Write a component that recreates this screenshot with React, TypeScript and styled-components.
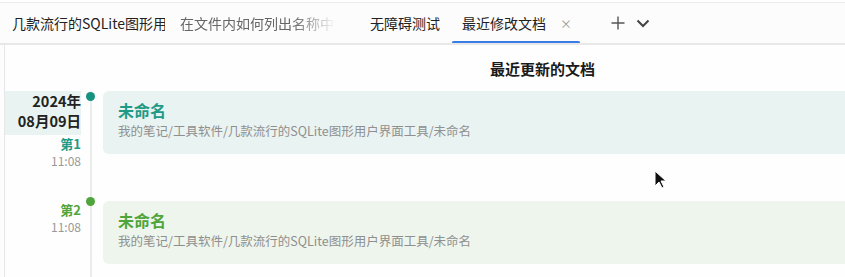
import * as React from "react";
import styled, { createGlobalStyle } from "styled-components";

const GlobalStyle = createGlobalStyle`
  html, body {
    margin: 0;
    padding: 0;
    background: #ffffff;
    font-family: "Noto Sans CJK SC", "Noto Sans", sans-serif;
  }
`;

const Page = styled.div`
  position: relative;
  width: 845px;
  height: 277px;
  overflow: hidden;
  background: #fdfdfd;
  border-top: 1px solid #ececec;
  margin-top: 2px;
  box-sizing: border-box;
`;

// tab strip along the top
const TabBar = styled.div`
  height: 42px;
  display: flex;
  align-items: stretch;
  border-bottom: 2px solid #e8e8e8;
  background: #fcfcfc;
  box-sizing: border-box;
`;

const Tab = styled.div<{ $width: number; $active?: boolean }>`
  position: relative;
  width: ${(p) => p.$width}px;
  flex: none;
  display: flex;
  align-items: center;
  padding-left: 12px;
  box-sizing: border-box;
  font-size: 14px;
  color: #222;
  white-space: nowrap;
  overflow: hidden;
  ${(p) =>
    p.$active &&
    `&::after {
      content: "";
      position: absolute;
      left: 2px;
      right: 0;
      bottom: -1px;
      height: 3px;
      border-radius: 2px;
      background: #3a7ce6;
    }`}
`;

// clipped label, optionally fading out at the end
const TabLabel = styled.span<{ $max: number; $fade?: boolean }>`
  display: block;
  max-width: ${(p) => p.$max}px;
  overflow: hidden;
  color: ${(p) => (p.$fade ? "#666" : "#222")};
  ${(p) =>
    p.$fade &&
    `-webkit-mask-image: linear-gradient(to right, #000 72%, transparent 100%);
     mask-image: linear-gradient(to right, #000 72%, transparent 100%);`}
`;

const TabClose = styled.span`
  margin-left: 14px;
  font-size: 12px;
  color: #9a9a9a;
`;

const TabActions = styled.div`
  display: flex;
  align-items: center;
  gap: 9px;
  padding-left: 30px;
  color: #555;
`;

const Body = styled.div`
  margin-left: 4px;
  border-left: 1px solid #e6e6e6;
  height: 240px;
  background: #fefefe;
`;

const Heading = styled.div`
  padding: 14px 0 0 485px;
  height: 32px;
  font-size: 15px;
  font-weight: 700;
  color: #1a1a1a;
  line-height: 20px;
`;

const Entry = styled.div`
  display: flex;
`;

const Left = styled.div`
  width: 76px;
  flex: none;
  display: flex;
  flex-direction: column;
  align-items: stretch;
  text-align: right;
`;

const DateBlock = styled.div`
  background: #e9f3f1;
  padding: 0 0 4px;
  font-size: 14.5px;
  font-weight: 700;
  color: #222;
  line-height: 20px;
`;

const Seq = styled.div<{ $color: string; $top: number }>`
  margin-top: ${(p) => p.$top}px;
  font-size: 13px;
  font-weight: 700;
  color: ${(p) => p.$color};
  line-height: 17px;
`;

const Time = styled.div`
  font-size: 12px;
  color: #999;
  line-height: 17px;
`;

const Rail = styled.div`
  position: relative;
  width: 22px;
  flex: none;
`;

const Dot = styled.span<{ $color: string; $top: number }>`
  position: absolute;
  left: 5px;
  top: ${(p) => p.$top}px;
  width: 9px;
  height: 9px;
  border-radius: 50%;
  background: ${(p) => p.$color};
`;

const Card = styled.div<{ $bg: string; $top: number }>`
  flex: 1;
  margin-top: ${(p) => p.$top}px;
  height: 63px;
  border-radius: 6px 0 0 6px;
  background: ${(p) => p.$bg};
  padding: 9px 0 0 15px;
  box-sizing: border-box;
`;

const CardTitle = styled.div<{ $color: string }>`
  font-size: 16px;
  font-weight: 700;
  color: ${(p) => p.$color};
  line-height: 21px;
`;

const CardPath = styled.div`
  font-size: 12.5px;
  color: #8f8f8f;
  line-height: 19px;
`;

const Timeline = styled.div`
  position: relative;
  &::before {
    content: "";
    position: absolute;
    left: 85px;
    top: 0;
    bottom: -60px;
    width: 2px;
    background: #ebebeb;
  }
`;

const Cursor = styled.svg`
  position: absolute;
  left: 654px;
  top: 167px;
`;

const path = "我的笔记/工具软件/几款流行的SQLite图形用户界面工具/未命名";

export default function App() {
  return (
    <>
      <GlobalStyle />
      <Page>
        <TabBar>
          <Tab $width={168}>
            <TabLabel $max={153}>几款流行的SQLite图形用户界面工具</TabLabel>
          </Tab>
          <Tab $width={190}>
            <TabLabel $max={156} $fade>在文件内如何列出名称中包含</TabLabel>
          </Tab>
          <Tab $width={92}>无障碍测试</Tab>
          <Tab $width={130} $active>
            最近修改文档<TabClose>×</TabClose>
          </Tab>
          <TabActions>
            <svg width="16" height="16" viewBox="0 0 16 16">
              <path d="M8 1.5v13M1.5 8h13" stroke="#555" strokeWidth="1.4" />
            </svg>
            <svg width="16" height="16" viewBox="0 0 16 16">
              <path d="M2.5 5.5L8 11l5.5-5.5" stroke="#444" strokeWidth="2" fill="none" />
            </svg>
          </TabActions>
        </TabBar>
        <Body>
          <Heading>最近更新的文档</Heading>
          <Timeline>
            <Entry>
              <Left>
                <DateBlock>
                  2024年
                  <br />
                  08月09日
                </DateBlock>
                <Seq $color="#1f9a86" $top={0}>第1</Seq>
                <Time>11:08</Time>
              </Left>
              <Rail>
                <Dot $color="#15937f" $top={1} />
              </Rail>
              <Card $bg="#e9f3f1" $top={0}>
                <CardTitle $color="#1f9a86">未命名</CardTitle>
                <CardPath>{path}</CardPath>
              </Card>
            </Entry>
            <Entry>
              <Left>
                <Seq $color="#4fa53c" $top={32}>第2</Seq>
                <Time>11:08</Time>
              </Left>
              <Rail>
                <Dot $color="#4fa53c" $top={28} />
              </Rail>
              <Card $bg="#eef5ec" $top={32}>
                <CardTitle $color="#4fa53c">未命名</CardTitle>
                <CardPath>{path}</CardPath>
              </Card>
            </Entry>
          </Timeline>
        </Body>
        <Cursor width="14" height="20" viewBox="0 0 14 20">
          <path d="M1 1v15l4-4 3 6 2-1-3-6h5z" fill="#111" stroke="#fff" strokeWidth="1" />
        </Cursor>
      </Page>
    </>
  );
}
